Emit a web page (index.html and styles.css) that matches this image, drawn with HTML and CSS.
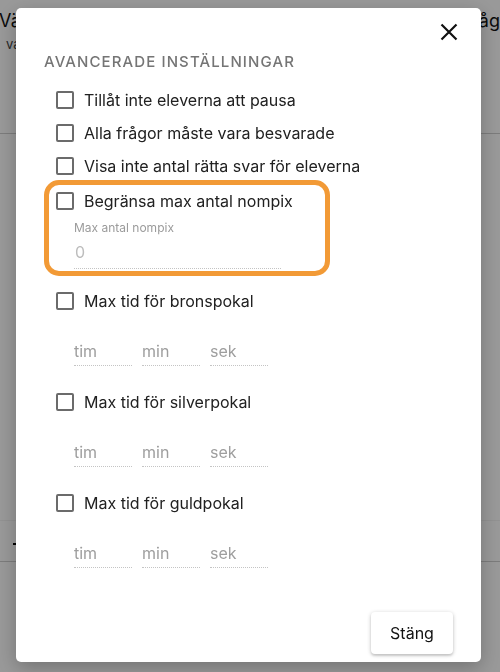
FILE: index.html
```html
<!DOCTYPE html>
<html lang="sv">
<head>
<meta charset="utf-8">
<link rel="stylesheet" href="styles.css">
</head>
<body>
<div class="page">
  <div class="page-head">
    <div class="page-col">
      <div class="page-title">Välj quiz</div>
      <div class="page-sub">var god välj</div>
    </div>
    <div class="page-right">fråg</div>
  </div>
  <div class="page-body"></div>
  <div class="page-foot"><span class="dash"></span></div>
</div>

<div class="overlay">
  <div class="dialog">
    <button class="close" aria-label="Stäng">
      <svg width="18" height="18" viewBox="0 0 18 18"><path d="M1.5 1.5 L16.5 16.5 M16.5 1.5 L1.5 16.5" stroke="#111" stroke-width="2.2" fill="none"/></svg>
    </button>
    <h2 class="heading">AVANCERADE INSTÄLLNINGAR</h2>

    <label class="check"><span class="box"></span><span>Tillåt inte eleverna att pausa</span></label>
    <label class="check"><span class="box"></span><span>Alla frågor måste vara besvarade</span></label>
    <label class="check"><span class="box"></span><span>Visa inte antal rätta svar för eleverna</span></label>

    <div class="highlight">
      <label class="check"><span class="box"></span><span>Begränsa max antal nompix</span></label>
      <div class="field">
        <div class="field-label">Max antal nompix</div>
        <div class="field-input">0</div>
      </div>
    </div>

    <label class="check trophy"><span class="box"></span><span>Max tid för bronspokal</span></label>
    <div class="times">
      <div class="time">tim</div><div class="time">min</div><div class="time">sek</div>
    </div>

    <label class="check trophy"><span class="box"></span><span>Max tid för silverpokal</span></label>
    <div class="times">
      <div class="time">tim</div><div class="time">min</div><div class="time">sek</div>
    </div>

    <label class="check trophy"><span class="box"></span><span>Max tid för guldpokal</span></label>
    <div class="times">
      <div class="time">tim</div><div class="time">min</div><div class="time">sek</div>
    </div>

    <div class="actions">
      <button class="btn">Stäng</button>
    </div>
  </div>
</div>
</body>
</html>
```

FILE: styles.css
```css
* { box-sizing: border-box; }
html, body { margin: 0; padding: 0; }
body {
  width: 500px;
  height: 672px;
  overflow: hidden;
  font-family: Inter, Roboto, "Liberation Sans", sans-serif;
  background: #fff;
  color: #212121;
}
.page { width: 500px; height: 672px; }
.page-head {
  display: flex;
  justify-content: space-between;
  height: 134px;
  border-bottom: 1px solid #cfcfcf;
}
.page-col { padding: 10px 0 0 0; }
.page-title { font-size: 18px; line-height: 22px; color: #111; margin-left: -1px; }
.page-sub { font-size: 13px; line-height: 20px; color: #444; margin-top: 2px; margin-left: 6px; }
.page-right { font-size: 18px; line-height: 22px; color: #111; padding-top: 10px; margin-right: 0; }
.page-body { height: 386px; }
.page-foot {
  height: 42px;
  border-top: 1px solid #f3f3f3;
  border-bottom: 1px solid #cfcfcf;
}
.dash { display: block; width: 4px; height: 2px; background: #000; margin: 22px 0 0 13px; }

.overlay {
  position: fixed;
  inset: 0;
  background: rgba(0, 0, 0, 0.4);
}
.dialog {
  position: absolute;
  left: 16px;
  top: 8px;
  width: 465px;
  height: 654px;
  background: #fff;
  border-radius: 5px;
  padding: 44px 28px 0 28px;
  box-shadow: 0 6px 20px rgba(0,0,0,0.25);
}
.close {
  position: absolute;
  top: 15px;
  right: 23px;
  border: 0;
  background: none;
  padding: 0;
  width: 18px;
  height: 18px;
  display: block;
}
.close svg { display: block; }
.heading {
  margin: 0 0 11.5px 0;
  font-size: 15px;
  line-height: 20px;
  font-weight: 500;
  letter-spacing: 1.1px;
  color: #757575;
}
.check {
  display: flex;
  align-items: center;
  gap: 10px;
  height: 33px;
  padding-left: 12px;
  font-size: 16px;
  color: #212121;
}
.box {
  width: 18px;
  height: 18px;
  border: 2px solid #6b6b6b;
  border-radius: 2px;
  flex: none;
}
.highlight {
  width: 286px;
  height: 96px;
  border: 5px solid #f29a36;
  border-radius: 15px;
  margin-top: -3px;
  padding: 0 0 0 7px;
}
.highlight .check { padding-left: 0; height: 32px; }
.field { padding-left: 18px; padding-top: 4px; }
.field-label { font-size: 12px; line-height: 14px; color: #9b9b9b; }
.field-input {
  width: 207px;
  font-size: 16px;
  line-height: 20px;
  color: #bdbdbd;
  padding: 7px 0 6px 1px;
  border-bottom: 1px dotted #c4c4c4;
}
.trophy { margin-top: 19px; height: 34px; }
.highlight + .trophy { margin-top: 8px; }
.times {
  display: flex;
  gap: 10px;
  padding-left: 30px;
  margin-top: 23px;
}
.time {
  width: 58px;
  font-size: 16px;
  line-height: 20px;
  color: #9e9e9e;
  padding: 0 0 4px 0;
  border-bottom: 1px dotted #c4c4c4;
}
.actions {
  position: absolute;
  right: 28px;
  bottom: 8px;
}
.btn {
  width: 82px;
  height: 42px;
  border: 0;
  border-radius: 4px;
  background: #fff;
  font-family: inherit;
  font-size: 16px;
  color: #111;
  box-shadow: 0 1px 4px rgba(0,0,0,0.22), 0 2px 2px rgba(0,0,0,0.1);
}
```
